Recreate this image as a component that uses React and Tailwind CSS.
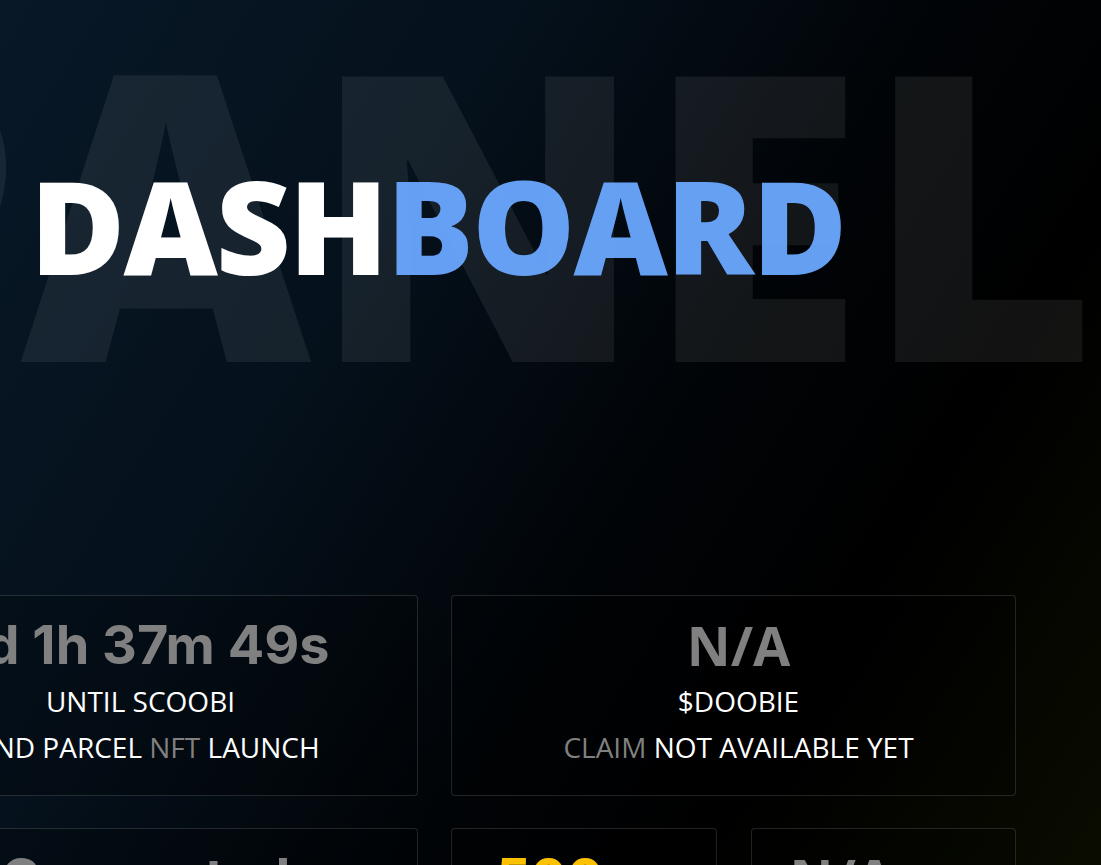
export default function App() {
  return (
    <div className="relative min-h-screen overflow-hidden bg-[linear-gradient(122deg,#081827_0%,#05111c_30%,#010407_55%,#000_72%,#0c0f00_100%)] font-['Open_Sans',sans-serif]">
      {/* big faded word behind the title */}
      <div className="pointer-events-none absolute left-[-232px] top-[7px] select-none whitespace-nowrap text-[400px] font-extrabold leading-none text-white/[0.07]">
        PANEL
      </div>

      <div className="relative">
        <h1 className="whitespace-nowrap pl-[30px] pt-[160px] text-[130px] font-extrabold leading-none tracking-[-2px]">
          <span className="text-white">DASH</span>
          <span className="text-[#6aa8ff]/95">BOARD</span>
        </h1>

        <div className="ml-[-147px] mt-[305px] grid w-[1163px] grid-cols-2 gap-x-[33px] gap-y-[32px]">
          {/* countdown */}
          <div className="rounded border border-white/[0.13] bg-black/20 pb-[25px] pl-[10px] pt-[22px] text-center">
            <p className="font-['Inter',sans-serif] text-[54px] font-bold leading-[54px] text-[#808080]">
              2d 1h 37m 49s
            </p>
            <p className="mt-[6px] text-[28px] leading-[46px] text-white">UNTIL SCOOBI</p>
            <p className="text-[28px] leading-[46px] text-white">
              LAND PARCEL <span className="text-[#808080]">NFT</span> LAUNCH
            </p>
          </div>

          {/* doobie claim */}
          <div className="rounded border border-white/[0.13] bg-black/20 pb-[25px] pl-[10px] pt-[22px] text-center">
            <p className="text-[54px] font-bold leading-[54px] text-[#808080]">N/A</p>
            <p className="mt-[6px] text-[28px] leading-[46px] text-white">$DOOBIE</p>
            <p className="text-[28px] leading-[46px] text-white">
              <span className="text-[#808080]">CLAIM</span> NOT AVAILABLE YET
            </p>
          </div>

          {/* wallet */}
          <div className="rounded border border-white/[0.13] bg-black/20 pb-[25px] pl-[20px] pt-[22px] text-center">
            <p className="font-['Inter',sans-serif] text-[54px] font-bold leading-[54px] text-[#808080]">
              Connected
            </p>
            <p className="mt-[6px] text-[28px] leading-[46px] text-white">WALLET</p>
          </div>

          <div className="grid grid-cols-2 gap-[34px]">
            <div className="rounded border border-white/[0.13] bg-black/20 pb-[25px] pl-[44px] pt-[22px]">
              <p className="font-['Inter',sans-serif] text-[54px] font-bold leading-[54px] text-[#fcc200]">500</p>
              <p className="mt-[6px] text-[28px] leading-[46px] text-white">SCOOBIS</p>
            </div>
            <div className="rounded border border-white/[0.13] bg-black/20 pb-[25px] pl-[38px] pt-[22px]">
              <p className="text-[54px] font-bold leading-[54px] text-[#808080]">N/A</p>
              <p className="mt-[6px] text-[28px] leading-[46px] text-white">STAKED</p>
            </div>
          </div>
        </div>
      </div>
    </div>
  )
}
